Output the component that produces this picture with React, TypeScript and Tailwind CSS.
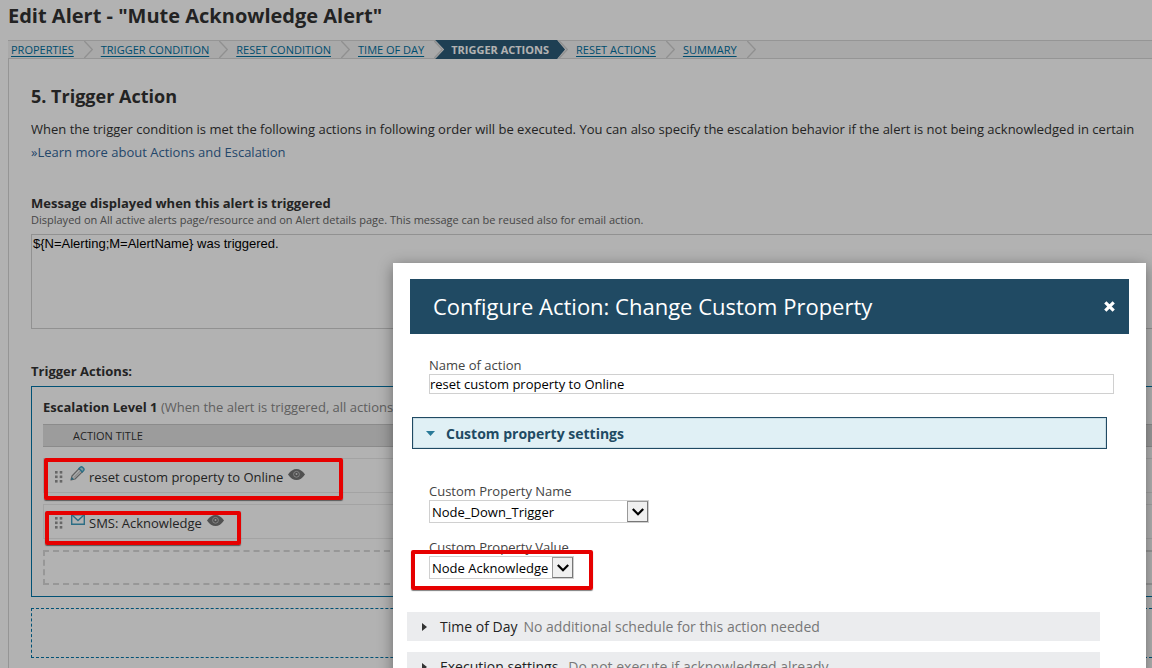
import React, { useState } from "react";
import clsx from "clsx";

type Action = {
  title: string;
  icon: "pencil" | "mail";
  highlight: string;
};

const steps = [
  "PROPERTIES",
  "TRIGGER CONDITION",
  "RESET CONDITION",
  "TIME OF DAY",
  "TRIGGER ACTIONS",
  "RESET ACTIONS",
  "SUMMARY",
];

const actions: Action[] = [
  {
    title: "reset custom property to Online",
    icon: "pencil",
    highlight: "left-0 -top-px h-[42px] w-[299px]",
  },
  {
    title: "SMS: Acknowledge",
    icon: "mail",
    highlight: "left-[1px] top-[6px] h-[34px] w-[196px]",
  },
];

const Chevron = () => (
  <svg
    width="9"
    height="17"
    viewBox="0 0 9 17"
    fill="none"
    stroke="#cfcfcf"
    strokeWidth="1.3"
    aria-hidden="true"
  >
    <path d="M0.3 0L8.3 8.5L0.3 17" />
  </svg>
);

const GripIcon = () => (
  <svg width="8" height="12" viewBox="0 0 8 12" fill="#949494" aria-hidden="true">
    {[0, 4.5, 9].map((y) => (
      <React.Fragment key={y}>
        <rect x="0" y={y} width="2.6" height="2.6" />
        <rect x="4.7" y={y} width="2.6" height="2.6" />
      </React.Fragment>
    ))}
  </svg>
);

const PencilIcon = () => (
  <svg width="15" height="15" viewBox="0 0 15 15" fill="none" aria-hidden="true">
    <path
      d="M1 14L2 10L9.5 2.2L12.8 5.4L5 13Z"
      fill="#f4f4f4"
      stroke="#8a8a8a"
      strokeWidth="1.2"
      strokeLinejoin="round"
    />
    <path d="M4 11.5L10.8 4.6" stroke="#b0b0b0" />
    <path
      d="M9 2.6L10.6 1.1Q11.6 0.4 12.8 1.6L13.5 2.3Q14.5 3.4 13.7 4.4L12.3 5.9Z"
      fill="#b5dbe6"
      stroke="#3a9fc0"
      strokeWidth="1.4"
    />
    <path d="M1 14L1.8 11L4 13.2Z" fill="#3a8fae" />
  </svg>
);

const MailIcon = () => (
  <svg
    width="14"
    height="11"
    viewBox="0 0 14 11"
    fill="none"
    stroke="#3f9dbf"
    strokeWidth="1.4"
    aria-hidden="true"
  >
    <path d="M0.7 0.7H13.3V10.3H0.7Z" />
    <path d="M1 1L7 6.5L13 1" />
  </svg>
);

const EyeIcon = () => (
  <svg width="17" height="11" viewBox="0 0 17 11" aria-hidden="true">
    <path d="M0 5.5Q3.8 0 8.5 0T17 5.5Q13.2 11 8.5 11T0 5.5Z" fill="#747474" />
    <circle cx="8.5" cy="5.3" r="2.9" fill="#707070" stroke="#c4c4c4" strokeWidth="0.9" />
    <circle cx="8.5" cy="5" r="1" fill="#dddddd" />
  </svg>
);

const Highlight = ({ className }: { className: string }) => (
  <div
    className={clsx(
      "pointer-events-none absolute z-30 rounded-[2px] border-4 border-[#e60000] shadow-[0_1px_1px_rgba(0,0,0,0.5)]",
      className
    )}
  />
);

const SelectField = ({
  id,
  label,
  value,
  className,
}: {
  id: string;
  label: string;
  value: string;
  className: string;
}) => (
  <div>
    <label htmlFor={id} className="block pt-px text-[13px] leading-[17px] text-[#444444]">
      {label}
    </label>
    <div className={clsx("relative", className)}>
      <select
        id={id}
        defaultValue={value}
        className="block h-[23px] w-full appearance-none border border-[#d0d0d0] bg-white pl-[2px] text-[13px] leading-5 text-black outline-none"
      >
        <option>{value}</option>
      </select>
      <span className="pointer-events-none absolute right-px top-px flex h-[21px] w-[21px] items-center justify-center border border-[#777777] border-l-[#999999] border-t-[#999999] bg-[#f0f0f0]">
        <svg width="12" height="8" viewBox="0 0 12 8" fill="none" stroke="#000" strokeWidth="2.2" aria-hidden="true">
          <path d="M0.8 0.9L6 6.2L11.2 0.9" />
        </svg>
      </span>
    </div>
  </div>
);

const CollapsedSection = ({ title, note, gap }: { title: string; note: string; gap: string }) => (
  <button
    type="button"
    className="flex h-[29px] w-full items-center bg-[#ebecee] pl-[15px] text-left text-[14px] leading-5"
  >
    <svg width="5" height="8" viewBox="0 0 5 8" fill="#333333" aria-hidden="true">
      <path d="M0 0L5 4L0 8Z" />
    </svg>
    <span className="ml-[13px] text-[#222222]">{title}</span>
    <span className={clsx("text-[#777777]", gap)}>{note}</span>
  </button>
);

const ConfigureDialog = ({ onClose }: { onClose: () => void }) => {
  const [name, setName] = useState("reset custom property to Online");

  return (
    <div
      role="dialog"
      aria-labelledby="dialog-title"
      className="absolute left-[393px] right-[6px] top-[263px] z-20 bg-white pb-8 pt-4 shadow-[0_3px_14px_rgba(0,0,0,0.4)]"
    >
      <header className="mx-[17px] flex h-[55px] items-center justify-between bg-[#204a63] pl-[23px] pr-[14px]">
        <h2 id="dialog-title" className="pb-[2px] text-[22px] leading-8 text-white">
          Configure Action: Change Custom Property
        </h2>
        <button type="button" aria-label="Close" onClick={onClose}>
          <svg width="11" height="11" viewBox="0 0 11 11" stroke="#fff" strokeWidth="3.2" aria-hidden="true">
            <path d="M1.3 1.3L9.7 9.7M9.7 1.3L1.3 9.7" />
          </svg>
        </button>
      </header>

      <div className="ml-9 mr-8 mt-[22px]">
        <label htmlFor="action-name" className="block text-[13px] leading-[18px] text-[#444444]">
          Name of action
        </label>
        <input
          id="action-name"
          value={name}
          onChange={(e) => setName(e.target.value)}
          className="block h-5 w-full border border-[#d0d0d0] text-[13px] leading-[18px] text-black outline-none"
        />
      </div>

      <button
        type="button"
        className="ml-[19px] mr-[39px] mt-[23px] flex h-8 w-[calc(100%-58px)] items-center border border-[#204a63] bg-[#e0f0f5] pl-[13px] text-left shadow-[inset_0_0_0_1px_#c9dde5]"
      >
        <svg width="9" height="5" viewBox="0 0 9 5" fill="#2a7a98" aria-hidden="true">
          <path d="M0 0H9L4.5 5Z" />
        </svg>
        <span className="ml-[11px] pt-[2px] text-[14px] font-bold leading-5 text-[#204a63]">
          Custom property settings
        </span>
      </button>

      <div className="relative ml-9 mt-[33px] flex flex-col gap-[15px]">
        <SelectField
          id="property-name"
          label="Custom Property Name"
          value="Node_Down_Trigger"
          className="w-[220px]"
        />
        <SelectField
          id="property-value"
          label="Custom Property Value"
          value="Node Acknowledge"
          className="w-[145px]"
        />
        <Highlight className="-bottom-[11px] -left-[18px] h-10 w-[182px]" />
      </div>

      <div className="ml-[14px] mr-[46px] mt-[33px] flex flex-col gap-[11px]">
        <CollapsedSection
          title="Time of Day"
          note="No additional schedule for this action needed"
          gap="ml-[6px]"
        />
        <CollapsedSection
          title="Execution settings"
          note="Do not execute if acknowledged already"
          gap="ml-[10px]"
        />
      </div>
    </div>
  );
};

const StepBar = () => (
  <nav className="ml-2 border-y border-[#d6d6d6] bg-[#f2f2f2]">
    <ol className="flex h-[17px] items-center pl-[3px] text-[11px] leading-4">
      {steps.map((step) => (
        <li key={step} className="mr-2 flex shrink-0 items-center gap-[10px]">
          {step === "TRIGGER ACTIONS" ? (
            <a
              href="#trigger-actions"
              aria-current="step"
              className="-mx-4 -my-px flex h-[19px] items-center bg-[#2b5b77] px-4 font-bold text-white [clip-path:polygon(0_0,calc(100%-8px)_0,100%_50%,calc(100%-8px)_100%,0_100%,9px_50%)]"
            >
              {step}
            </a>
          ) : (
            <a href="#step" className="text-[#00709f] underline underline-offset-2">
              {step}
            </a>
          )}
          <Chevron />
        </li>
      ))}
    </ol>
  </nav>
);

const App = () => {
  const [message, setMessage] = useState("${N=Alerting;M=AlertName} was triggered.");
  const [open, setOpen] = useState(true);

  return (
    <div className="relative h-screen overflow-hidden bg-white font-['Open_Sans',sans-serif] text-[13px] text-[#333333]">
      <h1 className="mb-2 pl-2 text-[20px] font-bold leading-8 text-[#333333]">
        Edit Alert - "Mute Acknowledge Alert"
      </h1>
      <StepBar />

      <main className="ml-2 min-h-screen border-l border-[#d6d6d6] pl-[22px] pt-[25px]">
        <h2 className="text-[18px] font-bold leading-6">5. Trigger Action</h2>
        <p className="mt-[11px] overflow-hidden whitespace-nowrap leading-5">
          When the trigger condition is met the following actions in following order will be
          executed. You can also specify the escalation behavior if the alert is not being
          acknowledged in certain
        </p>
        <a href="#learn" className="mt-[3px] block leading-5 text-[#336699]">
          »Learn more about Actions and Escalation
        </a>

        <label htmlFor="message" className="mt-8 block font-bold leading-[18px]">
          Message displayed when this alert is triggered
        </label>
        <p className="text-[11px] leading-4 text-[#666666]">
          Displayed on All active alerts page/resource and on Alert details page. This message can
          be reused also for email action.
        </p>
        <textarea
          id="message"
          value={message}
          onChange={(e) => setMessage(e.target.value)}
          className="mt-[6px] block h-[95px] w-full resize-none border border-r-0 border-[#d0d0d0] px-[1px] font-['Liberation_Sans',sans-serif] text-[13px] leading-[18px] text-black outline-none"
        />

        <h3 className="mt-[33px] font-bold leading-[18px]">Trigger Actions:</h3>
        <section className="mt-[6px] border border-r-0 border-[#0075a8] pb-[11px] pl-[11px] pt-[11px]">
          <h4 className="overflow-hidden whitespace-nowrap leading-[18px] text-[#888888]">
            <span className="font-bold text-[#333333]">Escalation Level 1</span> (When the alert is
            triggered, all actions in this level will be executed)
          </h4>
          <table className="-mt-[3px] w-full border-separate border-spacing-x-0 border-spacing-y-[11px]">
            <thead>
              <tr>
                <th className="h-[23px] border-y border-[#c8c8c8] bg-[#e0e0e0] p-0 pl-[30px] text-left text-[11px] font-normal leading-4">
                  ACTION TITLE
                </th>
              </tr>
            </thead>
            <tbody>
              {actions.map((action) => (
                <tr key={action.title}>
                  <td className="relative h-[35px] border border-r-0 border-[#eaeaea] p-0 pl-[11px]">
                    <div className="flex items-center pt-[2px] leading-[18px]">
                      <GripIcon />
                      <span className="-mt-[6px] ml-[7px] flex w-[15px] justify-center">
                        {action.icon === "pencil" ? <PencilIcon /> : <MailIcon />}
                      </span>
                      <span className="ml-1">{action.title}</span>
                      <span className="-mt-[5px] ml-[5px]">
                        <EyeIcon />
                      </span>
                    </div>
                    <Highlight className={action.highlight} />
                  </td>
                </tr>
              ))}
            </tbody>
          </table>
          <div className="h-[35px] border-2 border-r-0 border-dashed border-[#d8d8d8]" />
        </section>
        <div className="mt-[11px] h-[50px] border border-r-0 border-dashed border-[#0075a8]" />
      </main>

      {open && (
        <>
          <div className="absolute inset-0 z-10 bg-black/30" />
          <ConfigureDialog onClose={() => setOpen(false)} />
        </>
      )}
    </div>
  );
};

export default App;
